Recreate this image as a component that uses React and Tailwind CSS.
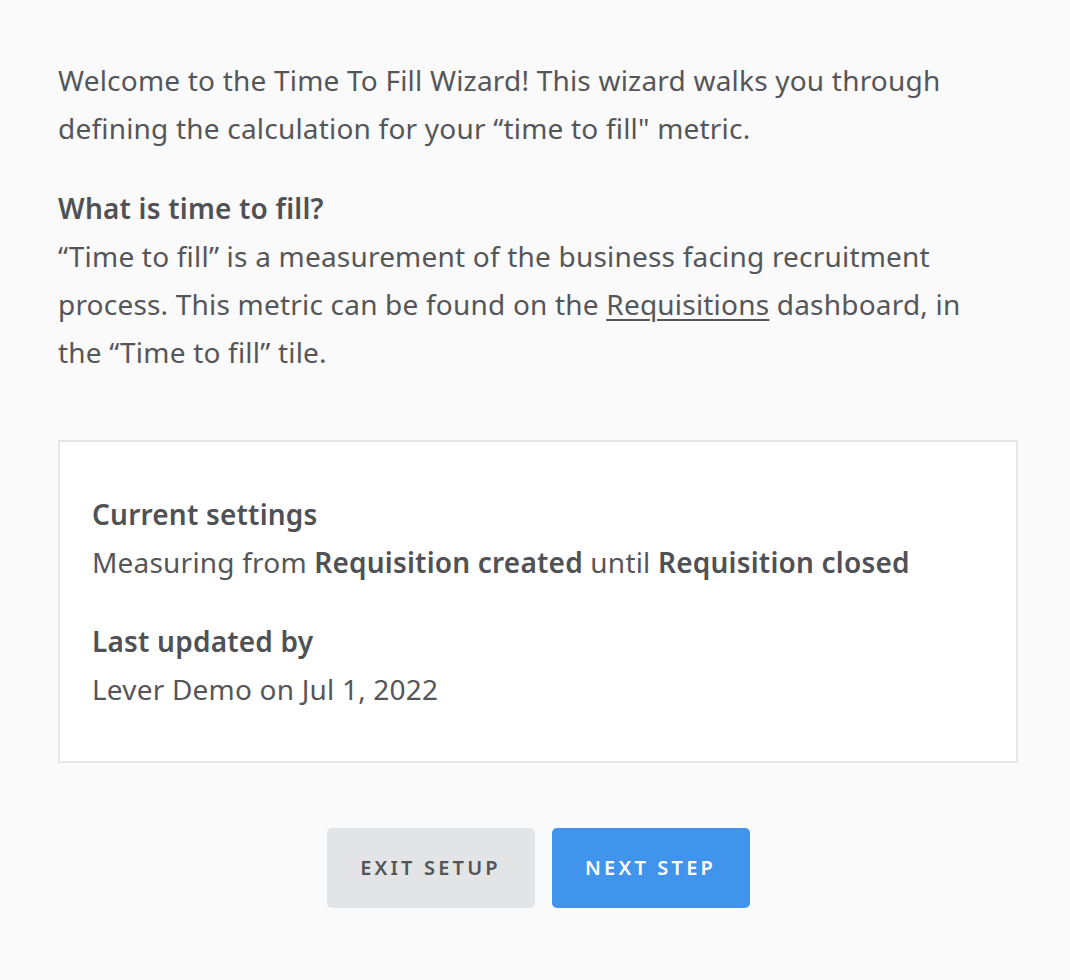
export default function App() {
  return (
    <div
      className="min-h-[980px] w-[1070px] bg-[#fafafa] text-[#555659] pt-[56px] pl-[58px]"
      style={{ fontFamily: '"Noto Sans", Lato, sans-serif' }}
    >
      <div className="w-[960px] text-[28px] leading-[48px] tracking-[0.2px]">
        <p>
          Welcome to the Time To Fill Wizard! This wizard walks you through
          <br />
          defining the calculation for your “time to fill" metric.
        </p>

        <div className="mt-[32px]">
          <p className="font-semibold text-[#505155]">What is time to fill?</p>
          <p>
            “Time to fill” is a measurement of the business facing recruitment
            <br />
            process. This metric can be found on the{' '}
            <span className="underline underline-offset-4 decoration-2">Requisitions</span> dashboard, in
            <br />
            the “Time to fill” tile.
          </p>
        </div>

        {/* Current settings card */}
        <div className="mt-[64px] bg-white border-2 border-[#e6e6e6] pl-[32px] py-[48px]">
          <p className="font-semibold text-[#505155]">Current settings</p>
          <p>
            Measuring from <span className="font-semibold text-[#505155]">Requisition created</span> until{' '}
            <span className="font-semibold text-[#505155]">Requisition closed</span>
          </p>
          <p className="mt-[31px] font-semibold text-[#505155]">Last updated by</p>
          <p>Lever Demo on Jul 1, 2022</p>
        </div>

        {/* Buttons */}
        <div className="mt-[65px] flex justify-center gap-[17px]">
          <button className="w-[208px] h-[80px] rounded-[5px] bg-[#e3e4e6] text-[#545557] text-[20px] font-semibold tracking-[0.16em] uppercase">
            Exit setup
          </button>
          <button className="w-[198px] h-[80px] rounded-[5px] bg-[#4094eb] text-white text-[20px] font-semibold tracking-[0.16em] uppercase">
            Next step
          </button>
        </div>
      </div>
    </div>
  )
}
